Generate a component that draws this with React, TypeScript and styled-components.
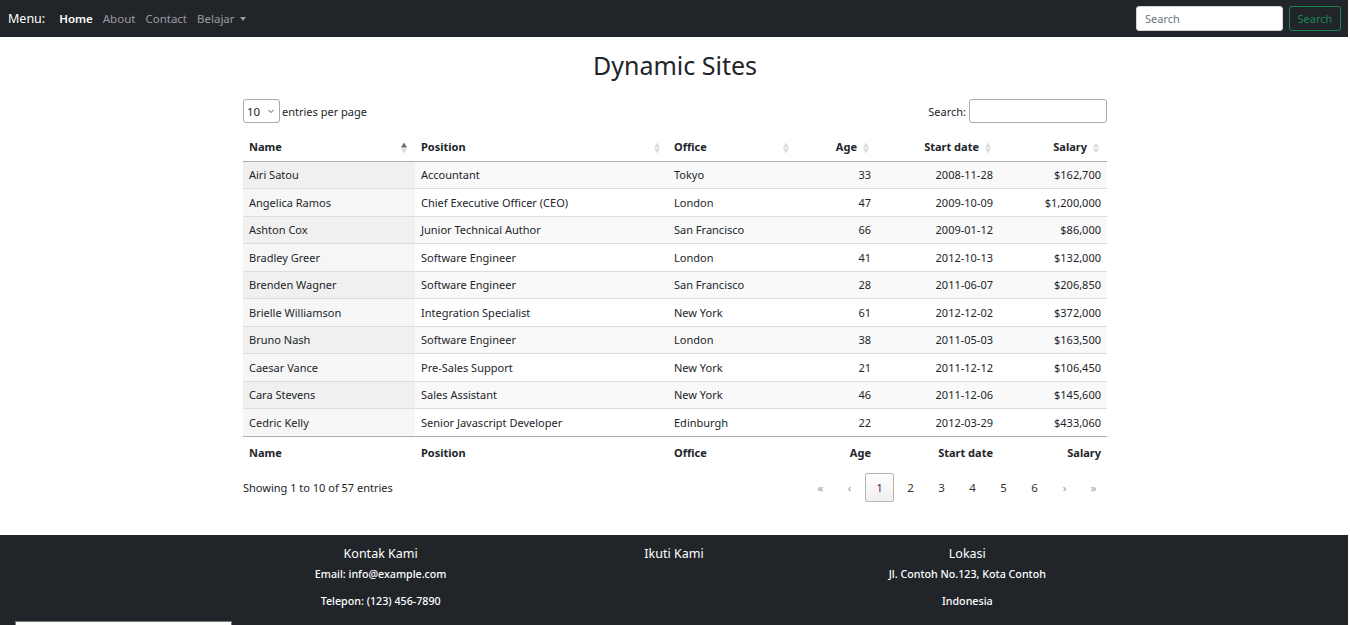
import React from 'react';
import styled, { createGlobalStyle, css } from 'styled-components';

const GlobalStyle = createGlobalStyle`
  html, body {
    margin: 0;
    padding: 0;
    background: #fff;
  }
  body {
    font-family: 'Noto Sans', 'Open Sans', sans-serif;
    color: #212529;
    font-size: 11px;
  }
`;

const font = `'Noto Sans', 'Open Sans', sans-serif`;

const NavBar = styled.nav`
  height: 37px;
  margin-right: 2px;
  background-color: #212529;
  display: flex;
  align-items: center;
  padding: 0 7px 0 8px;
`;

const Brand = styled.div`
  color: #fff;
  font-size: 12.5px;
  margin-right: 14px;
`;

const NavLinks = styled.div`
  display: flex;
  align-items: center;
  gap: 10px;
  flex: 1;
`;

const NavLink = styled.a<{ active?: boolean }>`
  font-size: 11.5px;
  text-decoration: none;
  color: ${({ active }) => (active ? '#fff' : 'rgba(255,255,255,0.55)')};
  font-weight: ${({ active }) => (active ? 600 : 400)};
  display: flex;
  align-items: center;
  gap: 5px;
`;

const Caret = styled.span`
  display: inline-block;
  width: 0;
  height: 0;
  border-left: 3.5px solid transparent;
  border-right: 3.5px solid transparent;
  border-top: 4px solid rgba(255, 255, 255, 0.55);
`;

const NavForm = styled.form`
  display: flex;
  gap: 6px;
`;

const NavInput = styled.input`
  width: 147px;
  height: 25px;
  box-sizing: border-box;
  border: 1px solid #ced4da;
  border-radius: 3px;
  padding: 0 8px;
  font-family: ${font};
  font-size: 11px;
  &::placeholder {
    color: #6c757d;
  }
`;

const OutlineButton = styled.button`
  height: 25px;
  width: 52px;
  box-sizing: border-box;
  background: transparent;
  border: 1px solid #198754;
  color: #198754;
  border-radius: 3px;
  font-family: ${font};
  font-size: 11px;
  padding: 0;
`;

const Main = styled.main`
  padding-top: 11px;
  padding-bottom: 33px;
`;

const Title = styled.h1`
  margin: 0 0 17px;
  text-align: center;
  font-weight: 400;
  font-size: 25px;
  line-height: 34px;
  color: #212529;
`;

const Wrapper = styled.div`
  width: 864px;
  margin: 0 auto;
`;

const TopControls = styled.div`
  display: flex;
  justify-content: space-between;
  align-items: center;
  height: 24px;
  margin-bottom: 12px;
`;

const Length = styled.label`
  display: flex;
  align-items: center;
  gap: 2px;
  font-size: 11px;
`;

const Select = styled.div`
  width: 37px;
  height: 24px;
  box-sizing: border-box;
  border: 1px solid #aaa;
  border-radius: 3px;
  display: flex;
  align-items: center;
  justify-content: space-between;
  padding: 0 4px 0 3px;
  font-size: 11.5px;
  svg {
    width: 8px;
    height: 8px;
  }
`;

const SearchLabel = styled.label`
  display: flex;
  align-items: center;
  gap: 3px;
  font-size: 11px;
`;

const SearchInput = styled.input`
  width: 138px;
  height: 24px;
  box-sizing: border-box;
  border: 1px solid #aaa;
  border-radius: 3px;
`;

const Table = styled.table`
  width: 100%;
  border-collapse: collapse;
  table-layout: fixed;
  font-size: 11px;
`;

const HeadCell = styled.th<{ numeric?: boolean; foot?: boolean }>`
  position: relative;
  text-align: ${({ numeric }) => (numeric ? 'right' : 'left')};
  font-weight: 700;
  font-size: 11px;
  line-height: 15px;
  ${({ foot }) =>
    foot
      ? css`
          height: 33px;
          box-sizing: border-box;
          padding: 8px 6px 10px 6px;
          border-top: 1px solid #adadad;
        `
      : css`
          height: 26px;
          box-sizing: border-box;
          padding: 4px 20px 6px 6px;
          border-bottom: 1px solid #adadad;
        `}
`;

const SortIcon = styled.span<{ dir?: 'asc' }>`
  position: absolute;
  right: 8px;
  top: 50%;
  transform: translateY(-50%);
  display: flex;
  flex-direction: column;
  gap: 1px;
  &::before,
  &::after {
    content: '';
    width: 0;
    height: 0;
    border-left: 3.5px solid transparent;
    border-right: 3.5px solid transparent;
  }
  &::before {
    border-bottom: 5px solid ${({ dir }) => (dir === 'asc' ? '#6b6b6b' : '#dcdcdc')};
  }
  &::after {
    border-top: 5px solid #dcdcdc;
  }
`;

const Row = styled.tr<{ odd: boolean }>`
  background-color: ${({ odd }) => (odd ? '#f9f9f9' : '#fff')};
  & + & {
    border-top: 1px solid #ddd;
  }
`;

const Cell = styled.td<{ numeric?: boolean; sorted?: boolean }>`
  padding: 6.5px 6px 5.5px;
  line-height: 14.5px;
  white-space: nowrap;
  text-align: ${({ numeric }) => (numeric ? 'right' : 'left')};
  ${({ sorted }) =>
    sorted &&
    css`
      background-color: rgba(0, 0, 0, 0.035);
    `}
`;

const BottomControls = styled.div`
  display: flex;
  justify-content: space-between;
  align-items: center;
  margin-top: 3px;
`;

const Info = styled.div`
  font-size: 11px;
`;

const Paging = styled.div`
  display: flex;
  align-items: center;
  gap: 2px;
`;

const PageBtn = styled.span<{ current?: boolean; disabled?: boolean; arrow?: boolean }>`
  width: ${({ arrow }) => (arrow ? 27 : 29)}px;
  height: 29px;
  box-sizing: border-box;
  display: grid;
  place-content: center;
  font-size: 11.5px;
  border-radius: 2px;
  border: 1px solid transparent;
  color: ${({ disabled }) => (disabled ? '#999' : '#333')};
  ${({ current }) =>
    current &&
    css`
      border-color: #b5b5b5;
      background: linear-gradient(#fefefe, #efefef);
      color: #3a2c5e;
    `}
`;

const Footer = styled.footer`
  background-color: #212529;
  color: #fff;
  margin-right: 2px;
  padding-top: 10px;
  height: 90px;
  box-sizing: border-box;
`;

const FooterGrid = styled.div`
  width: 880px;
  margin: 0 auto;
  display: grid;
  grid-template-columns: repeat(3, 1fr);
  text-align: center;
`;

const FooterTitle = styled.h5`
  margin: 0 0 4px;
  font-size: 12.5px;
  font-weight: 400;
  line-height: 17px;
`;

const FooterText = styled.p`
  margin: 0 0 10px;
  font-size: 10.7px;
  font-weight: 500;
  line-height: 17px;
`;

const ScrollStub = styled.div`
  margin: 1px 0 0 15px;
  width: 215px;
  height: 6px;
  background: #fff;
  border: 1px solid #777;
`;

const rows = [
  ['Airi Satou', 'Accountant', 'Tokyo', '33', '2008-11-28', '$162,700'],
  ['Angelica Ramos', 'Chief Executive Officer (CEO)', 'London', '47', '2009-10-09', '$1,200,000'],
  ['Ashton Cox', 'Junior Technical Author', 'San Francisco', '66', '2009-01-12', '$86,000'],
  ['Bradley Greer', 'Software Engineer', 'London', '41', '2012-10-13', '$132,000'],
  ['Brenden Wagner', 'Software Engineer', 'San Francisco', '28', '2011-06-07', '$206,850'],
  ['Brielle Williamson', 'Integration Specialist', 'New York', '61', '2012-12-02', '$372,000'],
  ['Bruno Nash', 'Software Engineer', 'London', '38', '2011-05-03', '$163,500'],
  ['Caesar Vance', 'Pre-Sales Support', 'New York', '21', '2011-12-12', '$106,450'],
  ['Cara Stevens', 'Sales Assistant', 'New York', '46', '2011-12-06', '$145,600'],
  ['Cedric Kelly', 'Senior Javascript Developer', 'Edinburgh', '22', '2012-03-29', '$433,060'],
];

const columns = [
  { title: 'Name', width: 172 },
  { title: 'Position', width: 253 },
  { title: 'Office', width: 129 },
  { title: 'Age', width: 80, numeric: true },
  { title: 'Start date', width: 122, numeric: true },
  { title: 'Salary', width: 108, numeric: true },
];

const pages = ['«', '‹', '1', '2', '3', '4', '5', '6', '›', '»'];

export default function App() {
  return (
    <>
      <GlobalStyle />
      <NavBar>
        <Brand>Menu:</Brand>
        <NavLinks>
          <NavLink active>Home</NavLink>
          <NavLink>About</NavLink>
          <NavLink>Contact</NavLink>
          <NavLink>
            Belajar <Caret />
          </NavLink>
        </NavLinks>
        <NavForm onSubmit={(e) => e.preventDefault()}>
          <NavInput placeholder="Search" />
          <OutlineButton type="submit">Search</OutlineButton>
        </NavForm>
      </NavBar>

      <Main>
        <Title>Dynamic Sites</Title>
        <Wrapper>
          <TopControls>
            <Length>
              <Select>
                10
                <svg viewBox="0 0 8 8" fill="none" stroke="#555" strokeWidth="1">
                  <path d="M1.5 3 L4 5.5 L6.5 3" />
                </svg>
              </Select>
              entries per page
            </Length>
            <SearchLabel>
              Search:
              <SearchInput />
            </SearchLabel>
          </TopControls>

          <Table>
            <colgroup>
              {columns.map((c) => (
                <col key={c.title} style={{ width: c.width }} />
              ))}
            </colgroup>
            <thead>
              <tr>
                {columns.map((c, i) => (
                  <HeadCell key={c.title} numeric={c.numeric}>
                    {c.title}
                    <SortIcon dir={i === 0 ? 'asc' : undefined} />
                  </HeadCell>
                ))}
              </tr>
            </thead>
            <tbody>
              {rows.map((r, ri) => (
                <Row key={r[0]} odd={ri % 2 === 0}>
                  {r.map((v, ci) => (
                    <Cell key={ci} numeric={columns[ci].numeric} sorted={ci === 0}>
                      {v}
                    </Cell>
                  ))}
                </Row>
              ))}
            </tbody>
            <tfoot>
              <tr>
                {columns.map((c) => (
                  <HeadCell key={c.title} numeric={c.numeric} foot>
                    {c.title}
                  </HeadCell>
                ))}
              </tr>
            </tfoot>
          </Table>

          <BottomControls>
            <Info>Showing 1 to 10 of 57 entries</Info>
            <Paging>
              {pages.map((p, i) => (
                <PageBtn
                  key={i}
                  current={p === '1'}
                  disabled={i < 2 || i > 7}
                  arrow={i < 2 || i > 7}
                >
                  {p}
                </PageBtn>
              ))}
            </Paging>
          </BottomControls>
        </Wrapper>
      </Main>

      <Footer>
        <FooterGrid>
          <div>
            <FooterTitle>Kontak Kami</FooterTitle>
            <FooterText>Email: info@example.com</FooterText>
            <FooterText>Telepon: (123) 456-7890</FooterText>
          </div>
          <div>
            <FooterTitle>Ikuti Kami</FooterTitle>
          </div>
          <div>
            <FooterTitle>Lokasi</FooterTitle>
            <FooterText>Jl. Contoh No.123, Kota Contoh</FooterText>
            <FooterText>Indonesia</FooterText>
          </div>
        </FooterGrid>
        <ScrollStub />
      </Footer>
    </>
  );
}
